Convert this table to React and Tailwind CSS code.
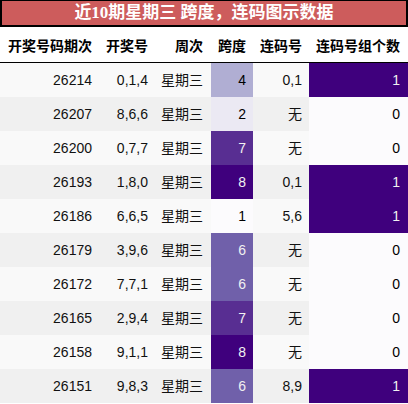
import React from "react";

const rows = [
  ["26214", "0,1,4", 4, "0,1", 1],
  ["26207", "8,6,6", 2, "无", 0],
  ["26200", "0,7,7", 7, "无", 0],
  ["26193", "1,8,0", 8, "0,1", 1],
  ["26186", "6,6,5", 1, "5,6", 1],
  ["26179", "3,9,6", 6, "无", 0],
  ["26172", "7,7,1", 6, "无", 0],
  ["26165", "2,9,4", 7, "无", 0],
  ["26158", "9,1,1", 8, "无", 0],
  ["26151", "9,8,3", 6, "8,9", 1],
];

const spanCls = {
  1: "bg-[#fcfbfd] text-black",
  2: "bg-[#ebe9f3] text-black",
  4: "bg-[#b0aed3] text-black",
  6: "bg-[#7060aa] text-[#f1f1f1]",
  7: "bg-[#582e92] text-[#f1f1f1]",
  8: "bg-[#3f007d] text-[#f1f1f1]",
};

const grid = "grid grid-cols-[100px_56px_55px_42px_56px_99px]";
const font = { fontFamily: '"Liberation Sans", "Noto Sans CJK SC", sans-serif' };

export default function App() {
  return (
    <div className="w-[408px] h-[404px] bg-white overflow-hidden" style={font}>
      <div
        className="h-[27px] bg-[#cd5c5c] border-x-2 border-b-2 border-t border-black flex items-center justify-center text-white font-bold text-[17px]"
        style={{ fontFamily: '"Liberation Serif", "Noto Sans CJK SC", serif' }}
      >
        近10期星期三 跨度，连码图示数据
      </div>
      <div className={`${grid} h-[36px] bg-white border-b border-black font-bold text-[14px] text-black items-center`}>
        <div className="text-right pr-2 pt-[3px]">开奖号码期次</div>
        <div className="text-right pr-2 pt-[3px]">开奖号</div>
        <div className="text-right pr-2 pt-[3px]">周次</div>
        <div className="text-right pr-[7px] pt-[3px]">跨度</div>
        <div className="text-right pr-[7px] pt-[3px]">连码号</div>
        <div className="text-right pr-2 pt-[3px]">连码号组个数</div>
      </div>
      {rows.map((r, i) => (
        <div
          key={r[0]}
          className={`${grid} h-[34px] text-[14px] text-[#111] ${i % 2 === 0 ? "bg-[#f9f9f9]" : "bg-[#f0f0f0]"}`}
        >
          <div className="flex items-center justify-end pr-2">{r[0]}</div>
          <div className="flex items-center justify-end pr-2">{r[1]}</div>
          <div className="flex items-center justify-end pr-2">星期三</div>
          <div className={`flex items-center justify-end pr-[7px] ${spanCls[r[2]]}`}>{r[2]}</div>
          <div className="flex items-center justify-end pr-[7px]">{r[3]}</div>
          <div
            className={`flex items-center justify-end pr-2 ${
              r[4] === 1 ? "bg-[#3f007d] text-[#f1f1f1]" : "bg-[#fcfbfd] text-black"
            }`}
          >
            {r[4]}
          </div>
        </div>
      ))}
    </div>
  );
}
